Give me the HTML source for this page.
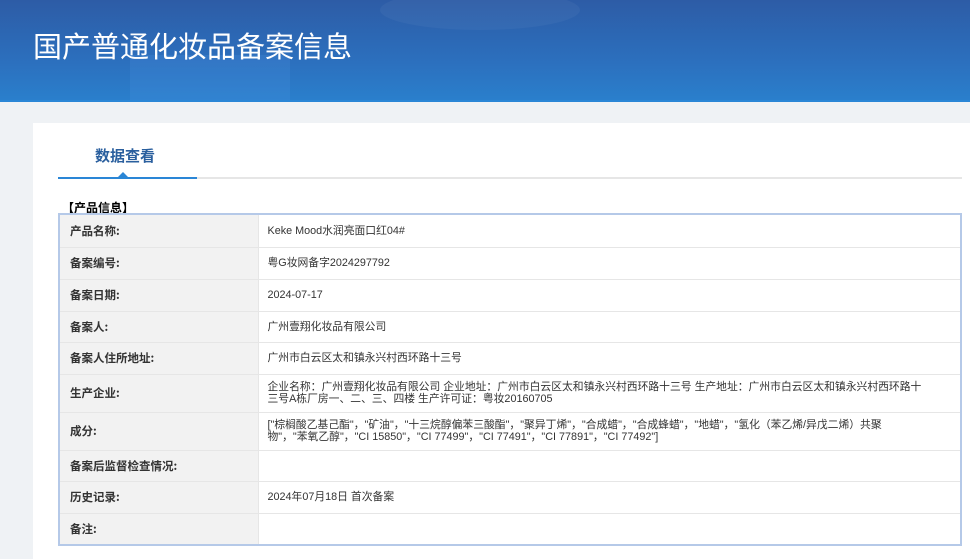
<!DOCTYPE html>
<html><head><meta charset="utf-8"><style>
*{margin:0;padding:0;box-sizing:border-box}
body{width:970px;height:559px;overflow:hidden;background:#eff2f5;font-family:"Liberation Sans","Noto Sans CJK SC",sans-serif;position:relative}
.hd{position:absolute;left:0;top:0;width:970px;height:102px;background:linear-gradient(180deg,#2d5ca6 0%,#2c6fbd 60%,#2a7fcc 100%);border-bottom:2px solid #2a86d6;overflow:hidden}
.hd .b1{position:absolute;left:130px;top:55px;width:160px;height:50px;background:rgba(80,150,230,.2)}
.hd .c1{position:absolute;left:380px;top:-10px;width:200px;height:40px;border-radius:50%;background:rgba(255,255,255,.04)}
.hd h1{position:absolute;left:33px;top:24px;font-size:29px;font-weight:normal;color:#fff;font-family:"Noto Sans CJK SC",sans-serif}
.card{position:absolute;left:33px;top:123px;width:937px;height:436px;background:#fff}
.tab{position:absolute;left:62px;top:22px;font-size:15px;font-weight:bold;color:#2a5f9e;font-family:"Noto Sans CJK SC",sans-serif}
.line{position:absolute;left:25px;top:54px;width:904px;height:2px;background:#e6e6e6}
.line2{position:absolute;left:25px;top:54px;width:139px;height:2px;background:#2a86d6}
.tri{position:absolute;left:85px;top:49px;width:0;height:0;border-left:5px solid transparent;border-right:5px solid transparent;border-bottom:5px solid #2a86d6}
.sec{position:absolute;left:29px;top:76px;font-size:12px;font-weight:bold;color:#000;font-family:"Noto Sans CJK SC",sans-serif}
table{position:absolute;left:25px;top:90px;width:904px;border-collapse:collapse;border:2px solid #b5c9e8;font-family:"Liberation Sans","Noto Sans CJK SC",sans-serif}
td{border:1px solid #e6e6e6;vertical-align:middle}
td.l{width:199px;background:#f2f2f2;font-weight:bold;color:#333;padding-left:10px;font-family:"Noto Sans CJK SC",sans-serif;font-size:11.5px}
td.v{color:#333;padding-left:9px;line-height:12px;font-size:10.8px;white-space:nowrap}
</style></head><body>
<div class="hd"><div class="b1"></div><div class="c1"></div><h1>国产普通化妆品备案信息</h1></div>
<div class="card">
<div class="tab">数据查看</div>
<div class="line"></div><div class="line2"></div><div class="tri"></div>
<div class="sec">【产品信息】</div>
<table>
<tr style="height:33px"><td class="l">产品名称:</td><td class="v">Keke Mood水润亮面口红04#</td></tr>
<tr style="height:32px"><td class="l">备案编号:</td><td class="v">粤G妆网备字2024297792</td></tr>
<tr style="height:32px"><td class="l">备案日期:</td><td class="v">2024-07-17</td></tr>
<tr style="height:31px"><td class="l">备案人:</td><td class="v">广州壹翔化妆品有限公司</td></tr>
<tr style="height:32px"><td class="l">备案人住所地址:</td><td class="v">广州市白云区太和镇永兴村西环路十三号</td></tr>
<tr style="height:38px"><td class="l">生产企业:</td><td class="v">企业名称：广州壹翔化妆品有限公司 企业地址：广州市白云区太和镇永兴村西环路十三号 生产地址：广州市白云区太和镇永兴村西环路十<br>三号A栋厂房一、二、三、四楼 生产许可证：粤妆20160705</td></tr>
<tr style="height:38px"><td class="l">成分:</td><td class="v">["棕榈酸乙基己酯"，"矿油"，"十三烷醇偏苯三酸酯"，"聚异丁烯"，"合成蜡"，"合成蜂蜡"，"地蜡"，"氢化（苯乙烯/异戊二烯）共聚<br>物"，"苯氧乙醇"，"CI 15850"，"CI 77499"，"CI 77491"，"CI 77891"，"CI 77492"]</td></tr>
<tr style="height:31px"><td class="l">备案后监督检查情况:</td><td class="v"></td></tr>
<tr style="height:32px"><td class="l">历史记录:</td><td class="v">2024年07月18日 首次备案</td></tr>
<tr style="height:32px"><td class="l">备注:</td><td class="v"></td></tr>
</table>
</div>
</body></html>
